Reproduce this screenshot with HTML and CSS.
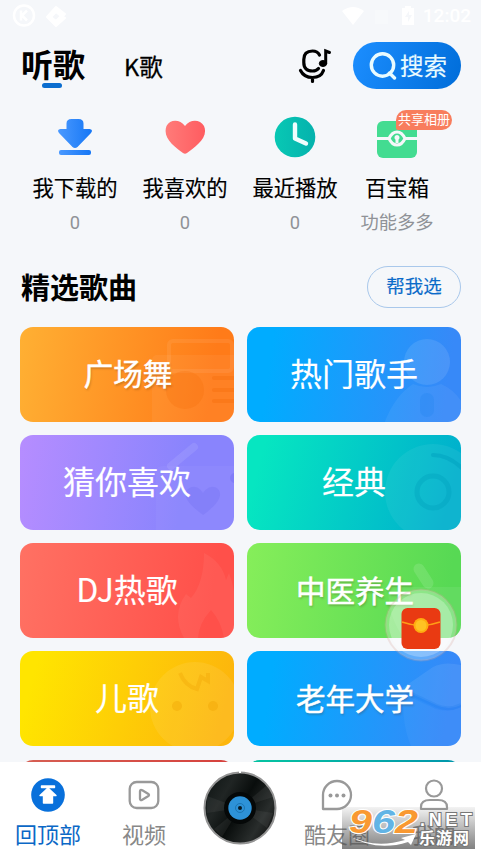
FILE: index.html
```html
<!DOCTYPE html>
<html lang="zh-CN">
<head>
<meta charset="utf-8">
<title>听歌</title>
<link rel="stylesheet" href="styles.css">
</head>
<body>
<div class="app">
  <div class="status">
    <svg class="status-left" width="60" height="26" viewBox="0 0 60 26">
      <circle cx="16" cy="12.500" r="10" fill="none" stroke="#fff" stroke-width="2.500"/>
      <path d="M13 7.500v10M19 7.500l-5 5 5 5" fill="none" stroke="#fff" stroke-width="2.500"/>
      <path d="M48 4L57 11 54 14 48 9 43 14 48 18 53 13 57 15 48 23 39 14Z" fill="#fff" stroke="#fff" stroke-width="2" stroke-linejoin="round"/>
    </svg>
    <div class="status-right">
      <svg width="80" height="22" viewBox="0 0 80 22" fill="#fff">
        <path d="M1 6Q12-2 23 6L12 20Z"/>
        <path d="M34 5h13v14H34z" opacity=".25"/>
        <path d="M61 3h3V1h6v2h3v17H61z"/>
        <path d="M68 6l-4 6h3v5l4-7h-3z" fill="#f5f7fa"/>
      </svg>
      <span class="time">12:02</span>
    </div>
  </div>

  <header class="header">
    <div class="tab tab-active">听歌<i class="tab-line"></i></div>
    <div class="tab tab-small">K歌</div>
    <svg class="mic" width="34" height="36" viewBox="0 0 34 36" fill="none" stroke="#000" stroke-width="3.200" stroke-linecap="round">
      <path d="M21.500 7Q19.500 3 14.500 3 5.800 3 5.800 11.500V14.500Q5.800 23 14.500 23 18.500 23 20.500 20.500"/>
      <path d="M2.500 22.500Q6 29.500 14.500 29.500T25.500 22.500M14.500 30V33.500"/>
      <ellipse cx="25" cy="15.500" rx="3.700" ry="3" fill="#000" stroke-width="1"/>
      <path d="M27.700 15V3L31.500 4.500" stroke-width="3"/>
    </svg>
    <div class="search">
      <svg width="28" height="28" viewBox="0 0 28 28" fill="none" stroke="#e9fbff" stroke-width="3.400" stroke-linecap="round"><circle cx="13.500" cy="13" r="11.200"/><path d="M20.500 21l5 5"/></svg>
      <span>搜索</span>
    </div>
  </header>

  <section class="shortcuts">
    <div class="shortcut">
      <svg width="44" height="44" viewBox="0 0 44 44">
        <defs><linearGradient id="dl"><stop stop-color="#4a99ff"/><stop offset="1" stop-color="#1677f5"/></linearGradient></defs>
        <path fill="url(#dl)" d="M18.500 4h7Q30.500 4 30.500 8.500V14H36.500Q40.500 14.500 38 18L24.500 32Q22 34 19.500 32L6 18Q3.500 14.500 7.500 14h6V8.500Q13.500 4 18.500 4Z"/>
        <rect x="6" y="35" width="32" height="5" rx="2" fill="url(#dl)"/>
      </svg>
      <span class="name">我下载的</span><span class="count">0</span>
    </div>
    <div class="shortcut">
      <svg width="44" height="44" viewBox="0 0 44 44">
        <defs><linearGradient id="ht"><stop stop-color="#ff7b79"/><stop offset="1" stop-color="#ff5c60"/></linearGradient></defs>
        <path fill="url(#ht)" d="M22 11C17 4 7 4 3.500 11-1 23 12 32 20 38Q22 39.500 24 38C32 32 46 23 41 11 37 4 27 4 22 11Z"/>
      </svg>
      <span class="name">我喜欢的</span><span class="count">0</span>
    </div>
    <div class="shortcut">
      <svg width="44" height="44" viewBox="0 0 44 44">
        <defs><linearGradient id="ck"><stop stop-color="#08c8b4"/><stop offset="1" stop-color="#05b2ad"/></linearGradient></defs>
        <circle cx="22" cy="22" r="20.300" fill="url(#ck)"/>
        <path d="M22 9.500V23.500L33 28.500" fill="none" stroke="#effdfd" stroke-width="4.400" stroke-linecap="round" stroke-linejoin="round"/>
      </svg>
      <span class="name">最近播放</span><span class="count">0</span>
    </div>
    <div class="shortcut shortcut-box">
      <svg width="44" height="44" viewBox="0 0 44 44">
        <rect x="2" y="6" width="40" height="37" rx="6" fill="#43dc91"/>
        <path d="M1 23.500h13Q17 17 22 17T30 23.500H43M14 23.500Q17 30 22 30T30 23.500" fill="none" stroke="#f5f7fa" stroke-width="3"/>
        <path d="M22 20a2.600 2.600 0 0 1 1.500 4.700V28h-3V24.700A2.600 2.600 0 0 1 22 20Z" fill="#f5f7fa"/>
      </svg>
      <span class="badge">共享相册</span>
      <span class="name">百宝箱</span><span class="count">功能多多</span>
    </div>
  </section>

  <div class="heading"><h2>精选歌曲</h2><div class="pick">帮我选</div></div>

  <main class="cards">
    <div class="card orange">
      <svg class="art" viewBox="0 0 90 95"><rect x="8" y="28" width="90" height="75" rx="5" fill="#fff" opacity=".05"/><rect x="25" y="14" width="63" height="30" rx="4" fill="none" stroke="#fff" stroke-opacity=".07" stroke-width="4"/><circle cx="41" cy="63" r="19" fill="#f46b08" opacity=".25"/><path d="M70 51h20M70 63h20M70 74h20" stroke="#f46b08" stroke-opacity=".35" stroke-width="4" stroke-linecap="round"/></svg>
      <span class="title small">广场舞</span></div>
    <div class="card blue">
      <svg class="art" viewBox="0 0 90 95"><circle cx="56" cy="35" r="23" fill="#fff" opacity=".1"/><path d="M42 57Q56 63 70 57 84 63 92 77V100H12Q22 70 42 57Z" fill="#fff" opacity=".06"/><rect x="49" y="66" width="14" height="24" rx="7" fill="#2586f2" opacity=".35"/></svg>
      <span class="title">热门歌手</span></div>
    <div class="card violet">
      <svg class="art" viewBox="0 0 90 95"><path d="M12 38Q12 31 19 31H90V95H12Z" fill="#fff" opacity=".035"/><path d="M27 31L50 12" stroke="#fff" stroke-opacity=".09" stroke-width="8" stroke-linecap="round"/><path d="M59 80C48 72 36 61 44 54 50 49 56 53 59 58 62 53 69 49 74 54 81 62 69 73 59 80Z" fill="#706cf0" opacity=".28"/><circle cx="91" cy="43" r="5" fill="#706cf0" opacity=".4"/></svg>
      <span class="title">猜你喜欢</span></div>
    <div class="card teal">
      <svg class="art" viewBox="0 0 90 95"><circle cx="62" cy="57" r="48" fill="#fff" opacity=".06"/><circle cx="62" cy="57" r="16" fill="none" stroke="#00a2bf" stroke-opacity=".4" stroke-width="5"/><path d="M62 20Q77 20 91 33" fill="none" stroke="#00a2bf" stroke-opacity=".5" stroke-width="4" stroke-linecap="round"/></svg>
      <span class="title">经典</span></div>
    <div class="card red">
      <svg class="art" viewBox="0 0 90 95"><path d="M60 10Q78 19 82 37L85 30Q95 55 90 95H80Q77 78 67 67 55 80 54 95H40Q27 72 42 51L47 55Q60 40 60 10Z" fill="#fff" opacity=".055"/></svg>
      <span class="title">DJ热歌</span></div>
    <div class="card green">
      <svg class="art" viewBox="0 0 90 95"><path d="M17 44H90V95H33Q17 75 17 44Z" fill="#fff" opacity=".07"/><path d="M48 26L57 40" stroke="#fff" stroke-opacity=".12" stroke-width="11" stroke-linecap="round"/></svg>
      <span class="title small">中医养生</span></div>
    <div class="card yellow">
      <svg class="art" viewBox="0 0 90 95"><circle cx="51" cy="56" r="45" fill="#fff" opacity=".08"/><path d="M36 22Q41 35 53 38L57 26 64 30V22" fill="none" stroke="#f0a000" stroke-opacity=".3" stroke-width="4"/><circle cx="33" cy="55" r="5" fill="#eda000" opacity=".35"/><circle cx="69" cy="55" r="5" fill="#eda000" opacity=".35"/></svg>
      <span class="title">儿歌</span></div>
    <div class="card blue">
      <svg class="art" viewBox="0 0 90 95"><path d="M30 38L62 16Q73 10 90 14V54Q78 60 65 54Z" fill="#fff" opacity=".08"/><path d="M32 43L65 58Q77 62 90 56V95H40Q31 75 32 43Z" fill="#fff" opacity=".04"/><path d="M34 40L66 55Q78 60 90 54" fill="none" stroke="#1278e9" stroke-opacity=".2" stroke-width="4"/></svg>
      <span class="title small">老年大学</span></div>
    <div class="card red dim"></div>
    <div class="card teal dim"></div>
  </main>

  <nav class="nav">
    <div class="nav-item active">
      <svg width="36" height="36" viewBox="0 0 36 36"><circle cx="18" cy="18" r="16.800" fill="#0870db"/><path d="M11.500 9h13v1.500h-13zM18 11L26 18.500H22.500V26h-9v-7.500H10Z" fill="#fff" stroke="#fff" stroke-width="1.400" stroke-linejoin="round"/></svg>
      <span>回顶部</span></div>
    <div class="nav-item">
      <svg width="36" height="36" viewBox="0 0 36 36" fill="none" stroke="#999" stroke-width="2.300" stroke-linejoin="round"><rect x="3.700" y="5" width="28.600" height="26" rx="7"/><path d="M14 14.500Q14 12 16.300 13.200L22 16.700Q24 18 22 19.300L16.300 22.800Q14 24 14 21.500Z"/></svg>
      <span>视频</span></div>
    <div class="nav-item disc">
      <svg width="76" height="76" viewBox="0 0 76 76">
        <defs><linearGradient id="disc" x1="0" y1=".2" x2="1" y2=".8"><stop stop-color="#111716"/><stop offset=".25" stop-color="#202524"/><stop offset=".5" stop-color="#090d0c"/><stop offset=".8" stop-color="#292d2c"/><stop offset="1" stop-color="#111"/></linearGradient></defs>
        <circle cx="38" cy="38" r="35.500" fill="url(#disc)" stroke="#949494" stroke-width="2"/>
        <g fill="#aaa" opacity=".09"><path d="M38 38L5 26V43ZM38 38L65 15 71 27ZM38 38L71 43 65 58ZM38 38L12 59 20 67Z"/></g>
        <circle cx="38" cy="38" r="16" fill="#050808"/><circle cx="38" cy="38" r="11.700" fill="#2d92d8"/><circle cx="38" cy="38" r="4.500" fill="none" stroke="#176da9" stroke-width=".8"/><circle cx="38" cy="38" r="2" fill="#081923"/><path d="M38 0v3" stroke="#fff" stroke-width="2"/>
      </svg></div>
    <div class="nav-item">
      <svg width="36" height="36" viewBox="0 0 36 36"><path d="M4 32V18A14 14 0 1 1 18 32Z" fill="none" stroke="#999" stroke-width="2.300" stroke-linejoin="round"/><g fill="#999"><circle cx="11.500" cy="18.500" r="2"/><circle cx="18" cy="18.500" r="2"/><circle cx="24.500" cy="18.500" r="2"/></g></svg>
      <span>酷友圈</span></div>
    <div class="nav-item">
      <svg width="36" height="36" viewBox="0 0 36 36" fill="none" stroke="#999" stroke-width="2.200"><circle cx="18" cy="11.500" r="8"/><path d="M5 32V30Q5 23 14 23H22Q31 23 31 30V32Z" stroke-linejoin="round"/></svg>
      <span>我的</span></div>
  </nav>

  <div class="gift">
    <svg width="74" height="74" viewBox="0 0 74 74"><circle cx="37" cy="37" r="35.500" fill="#fff" fill-opacity=".25" stroke="#d6a29b" stroke-opacity=".25" stroke-width="2"/><circle cx="37" cy="37" r="32" fill="#fff" opacity=".25"/>
      <rect x="17.500" y="20" width="39" height="41" rx="6" fill="#e93a12"/><path d="M18 34Q37 41 56 34" fill="none" stroke="#ff9d16" stroke-width="1.600"/><circle cx="37" cy="37.500" r="7.500" fill="#ffac10"/><circle cx="37" cy="37.500" r="5.500" fill="#ffc323"/></svg>
  </div>
  <div class="mark">
    <svg width="133" height="42" viewBox="0 0 133 42">
      <g class="mark-num"><text x="7" y="26" fill="#f99932" textLength="23" lengthAdjust="spacingAndGlyphs">9</text><text x="30" y="26" fill="#62b4e5" textLength="23" lengthAdjust="spacingAndGlyphs">6</text><text x="53" y="26" fill="#f99932" textLength="23" lengthAdjust="spacingAndGlyphs">2</text></g>
      <text class="mark-net" x="78" y="19" textLength="52" lengthAdjust="spacing">.NET</text>
      <path d="M7 29Q33 42 63 33L59 31 74 27 69 38 66 35Q35 45 7 29Z" fill="#fff"/>
      <text class="mark-cn" x="77" y="37" textLength="50">乐游网</text>
    </svg>
  </div>
</div>
</body>
</html>
```

FILE: styles.css
```css
* { box-sizing: border-box; }
body { margin: 0; overflow: hidden; font-family: Roboto, "Noto Sans CJK SC", sans-serif; }
svg { display: block; flex: none; }
.app { position: relative; width: 481px; height: 855px; overflow: hidden; background: #f5f7fa; display: flex; flex-direction: column; }

.status { height: 34px; flex: none; display: flex; justify-content: space-between; padding: 3px 10px 0 8px; }
.status-right { display: flex; align-items: center; gap: 2px; height: 26px; color: #fff; }
.time { font-size: 19px; font-weight: 500; line-height: 26px; }

.header { height: 63px; flex: none; display: flex; align-items: center; padding: 0 20px 0 21px; color: #000; }
.tab { font-family: "Noto Sans CJK SC", sans-serif; }
.tab-active { position: relative; width: 64px; margin-top: -6px; font-size: 32px; font-weight: 700; line-height: 46px; }
.tab-line { position: absolute; left: 21px; top: 43px; width: 20px; height: 5px; border-radius: 3px; background: #0b6dcf; }
.tab-small { margin: 1px 0 0 39px; font-size: 23.500px; line-height: 34px; -webkit-text-stroke: .3px; }
.mic { margin-left: auto; }
.search { margin-left: 21px; width: 108px; height: 47px; border-radius: 24px; background: linear-gradient(110deg, #1c8eff, #006dd9); display: flex; align-items: center; gap: 3px; padding-left: 16px; color: #e9fbff; font-size: 23.5px; white-space: nowrap; -webkit-text-stroke: .2px; }
.search span { padding-bottom: 1px; }

.shortcuts { height: 152px; flex: none; display: grid; grid-template-columns: 110px 110px 110px 94px; padding: 18px 0 0 20px; align-items: start; }
.shortcut { position: relative; display: flex; flex-direction: column; align-items: center; white-space: nowrap; }
.name { margin-top: 14px; font-size: 21.3px; line-height: 32px; color: #000; -webkit-text-stroke: .15px; }
.count { margin-top: 3.500px; font-size: 18.3px; line-height: 28px; color: #8f9297; }
.badge { position: absolute; left: 46px; top: -5px; width: 56px; height: 20px; border-radius: 10px 10px 10px 2px; background: #f87d5d; color: #fff; font-size: 13px; line-height: 20px; text-align: center; }

.heading { height: 77.500px; flex: none; display: flex; justify-content: space-between; padding: 17px 20px 0 21px; }
h2 { margin: 0; padding-top: 1px; font-size: 29px; line-height: 44px; font-weight: 700; }
.pick { width: 94px; height: 42px; border: 1.500px solid #a9c8eb; border-radius: 21px; color: #0b6bc9; font-size: 18.500px; line-height: 41px; text-align: center; -webkit-text-stroke: .15px; }

.cards { flex: 1; min-height: 0; overflow: hidden; display: grid; grid-template-columns: 214px 214px; grid-auto-rows: 95px; gap: 13.300px 13px; padding: 0 20px; }
.card { position: relative; overflow: hidden; border-radius: 13px; display: flex; align-items: center; justify-content: center; }
.art { position: absolute; right: 0; top: 0; width: 90px; height: 95px; }
.title { color: #fff; font-family: "Noto Sans CJK SC", sans-serif; font-size: 32px; line-height: 46px; padding-bottom: 5px; z-index: 1; -webkit-text-stroke: .15px; }
.title.small { font-size: 29.500px; padding: 0 0 4px 2px; -webkit-text-stroke: .5px; text-shadow: 1px 2px 2px rgba(80, 50, 20, .25); }
.orange { background: linear-gradient(98deg, #ffb033, #ff7b19 88%); }
.blue { background: linear-gradient(98deg, #00acff 12%, #3789f8 92%); }
.violet { background: linear-gradient(98deg, #b68dff, #8984fd 75%); }
.teal { background: linear-gradient(105deg, #06e6c1 8%, #00b0cd 92%); }
.red { background: linear-gradient(98deg, #ff7163, #ff504a 88%); }
.green { background: linear-gradient(98deg, #86ee5a, #57d954 92%); }
.yellow { background: linear-gradient(105deg, #ffe500 8%, #fdb60c 92%); }
.dim { filter: brightness(.84); }

.nav { height: 93px; flex: none; display: grid; grid-template-columns: 96px 96px 96px 98px 95px; background: #fff; }
.nav-item { display: flex; flex-direction: column; align-items: center; padding-top: 15px; color: #888; font-size: 22px; line-height: 32px; white-space: nowrap; }
.nav-item span { margin-top: 7px; }
.active { color: #0b68c6; }
.disc { padding-top: 8px; }

.gift { position: absolute; z-index: 2; left: 384px; top: 588px; }
.mark { position: absolute; z-index: 2; left: 342px; top: 807px; width: 133px; height: 42px; background: linear-gradient(rgba(155, 155, 155, .12), rgba(80, 80, 80, .72)); }
.mark svg { overflow: visible; }
.mark-num { font: italic 700 33px "Liberation Sans", sans-serif; stroke: #fff; stroke-width: 2px; paint-order: stroke; }
.mark-net { font: 700 18px "Liberation Sans", sans-serif; fill: #fff; stroke: #777; stroke-width: 2px; paint-order: stroke; }
.mark-cn { font: 700 16px "Noto Sans CJK SC", sans-serif; fill: #fff; stroke: #777; stroke-width: 2px; paint-order: stroke; }
```
